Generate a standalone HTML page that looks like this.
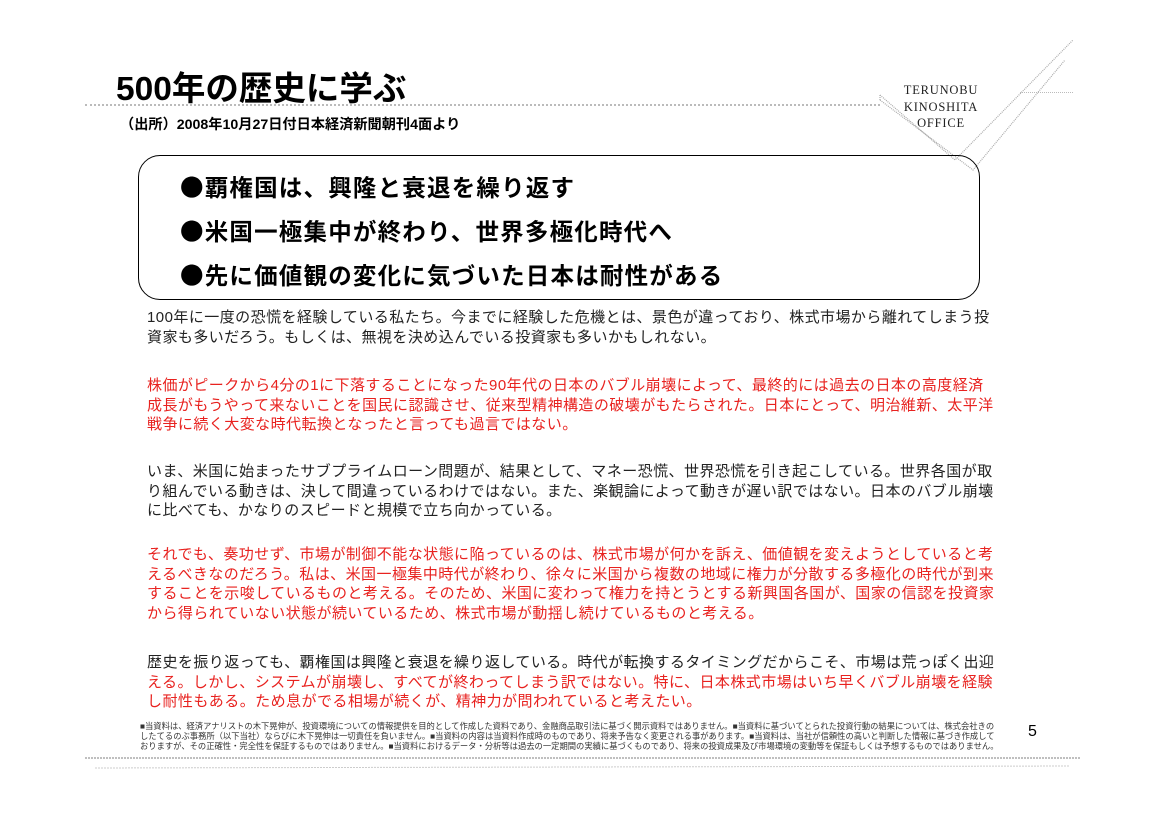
<!DOCTYPE html>
<html><head><meta charset="utf-8"><style>
body{margin:0;width:1155px;height:818px;background:#fff;position:relative;overflow:hidden;font-family:"Liberation Sans","Noto Sans CJK JP",sans-serif;}
.a{position:absolute;white-space:nowrap}
.title{left:116px;top:61px;font-size:33.5px;font-weight:bold;color:#000}
.sub{left:120px;top:114px;font-size:14.2px;font-weight:bold}
.box{position:absolute;left:138px;top:155px;width:840px;height:143px;border:1.5px solid #000;border-radius:22px}
.b{left:180px;font-size:23.5px;font-weight:bold;letter-spacing:1.2px}
.b span{font-family:"Noto Sans CJK JP",sans-serif}
.p{position:absolute;left:147px;width:852px;font-size:15px;letter-spacing:0.45px;line-height:19.6px;color:#222}
.r{color:#e8221f}
.f{left:140px;font-size:8.3px;line-height:10px;color:#333}
.logo{font-family:"Liberation Serif",serif;font-size:12.5px;text-align:center;line-height:16.5px;left:902px;top:82px;width:78px;color:#222;letter-spacing:0.8px}
</style></head><body>
<div class="a title">500年の歴史に学ぶ</div>
<div style="position:absolute;left:85px;top:104px;width:795px;border-top:2px dotted #bbb"></div>
<div style="position:absolute;left:1020px;top:92px;width:53px;border-top:1px dotted #bbb"></div>
<svg style="position:absolute;left:0;top:0" width="1155" height="818">
<g stroke="#aaa" stroke-width="1.2" fill="none" stroke-dasharray="1 1">
<polyline points="880,95 955,160 1073,40"/>
<polyline points="880,100 973,170 1065,60"/>
<polyline points="880,95 880,100"/>
</g>
<line x1="85" y1="758" x2="1080" y2="758" stroke="#aaa" stroke-width="1.5" stroke-dasharray="2 1"/>
<line x1="95" y1="768" x2="1070" y2="766" stroke="#ccc" stroke-width="1" stroke-dasharray="2 1"/>
</svg>
<div class="a logo">TERUNOBU<br>KINOSHITA<br>OFFICE</div>
<div class="a sub">（出所）2008年10月27日付日本経済新聞朝刊4面より</div>
<div class="box"></div>
<div class="a b" style="top:169px"><span>●</span>覇権国は、興隆と衰退を繰り返す</div>
<div class="a b" style="top:213px"><span>●</span>米国一極集中が終わり、世界多極化時代へ</div>
<div class="a b" style="top:257px"><span>●</span>先に価値観の変化に気づいた日本は耐性がある</div>
<div class="p" style="top:308px">100年に一度の恐慌を経験している私たち。今までに経験した危機とは、景色が違っており、株式市場から離れてしまう投資家も多いだろう。もしくは、無視を決め込んでいる投資家も多いかもしれない。</div>
<div class="p r" style="top:376px">株価がピークから4分の1に下落することになった90年代の日本のバブル崩壊によって、最終的には過去の日本の高度経済成長がもうやって来ないことを国民に認識させ、従来型精神構造の破壊がもたらされた。日本にとって、明治維新、太平洋戦争に続く大変な時代転換となったと言っても過言ではない。</div>
<div class="p" style="top:462px">いま、米国に始まったサブプライムローン問題が、結果として、マネー恐慌、世界恐慌を引き起こしている。世界各国が取り組んでいる動きは、決して間違っているわけではない。また、楽観論によって動きが遅い訳ではない。日本のバブル崩壊に比べても、かなりのスピードと規模で立ち向かっている。</div>
<div class="p r" style="top:545px">それでも、奏功せず、市場が制御不能な状態に陥っているのは、株式市場が何かを訴え、価値観を変えようとしていると考えるべきなのだろう。私は、米国一極集中時代が終わり、徐々に米国から複数の地域に権力が分散する多極化の時代が到来することを示唆しているものと考える。そのため、米国に変わって権力を持とうとする新興国各国が、国家の信認を投資家から得られていない状態が続いているため、株式市場が動揺し続けているものと考える。</div>
<div class="p" style="top:653px">歴史を振り返っても、覇権国は興隆と衰退を繰り返している。時代が転換するタイミングだからこそ、市場は荒っぽく出迎<span class="r">える。しかし、システムが崩壊し、すべてが終わってしまう訳ではない。特に、日本株式市場はいち早くバブル崩壊を経験し耐性もある。ため息がでる相場が続くが、精神力が問われていると考えたい。</span></div>
<div class="a f" style="top:721px">■当資料は、経済アナリストの木下晃伸が、投資環境についての情報提供を目的として作成した資料であり、金融商品取引法に基づく開示資料ではありません。■当資料に基づいてとられた投資行動の結果については、株式会社きの<br>したてるのぶ事務所（以下当社）ならびに木下晃伸は一切責任を負いません。■当資料の内容は当資料作成時のものであり、将来予告なく変更される事があります。■当資料は、当社が信頼性の高いと判断した情報に基づき作成して<br>おりますが、その正確性・完全性を保証するものではありません。■当資料におけるデータ・分析等は過去の一定期間の実績に基づくものであり、将来の投資成果及び市場環境の変動等を保証もしくは予想するものではありません。</div>
<div class="a" style="left:1028px;top:723px;font-size:16px">5</div>
</body></html>
